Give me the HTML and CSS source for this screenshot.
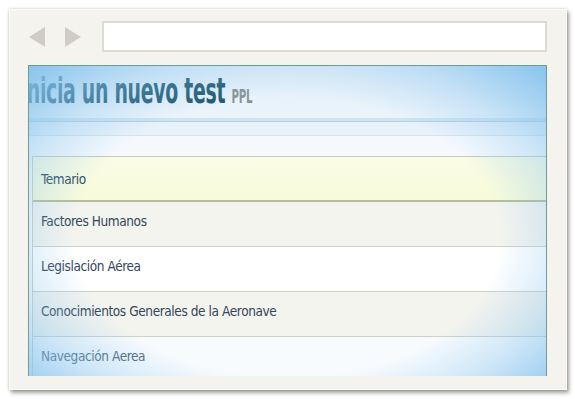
FILE: index.html
```html
<!DOCTYPE html>
<html lang="es">
<head>
    <meta charset="UTF-8">
    <meta name="viewport" content="width=device-width, initial-scale=1.0">
    <title>Inicia un nuevo test</title>
    <link rel="stylesheet" href="styles.css">
</head>
<body>

    <div class="browser">
        <div class="toolbar">
            <div class="nav">
                <svg width="52" height="20" viewBox="0 0 52 20">
                    <polygon points="0,10 16,0 16,20" fill="#cfccc5"/>
                    <polygon points="36,0 52,10 36,20" fill="#cfccc5"/>
                </svg>
            </div>
            <div class="url"></div>
        </div>

        <div class="screen">
            <div class="header">
                <h1><span class="title">Inicia un nuevo test <small>PPL</small></span></h1>
            </div>
            <div class="stripe"></div>
            <div class="sub"></div>

            <ul class="list">
                <li class="head">Temario</li>
                <li class="alt">Factores Humanos</li>
                <li>Legislación Aérea</li>
                <li class="alt">Conocimientos Generales de la Aeronave</li>
                <li class="last">Navegación Aerea<div class="btn"></div></li>
            </ul>

            <div class="vignette"></div>
        </div>
    </div>

</body>
</html>
```

FILE: styles.css
```css
* {
    margin: 0;
    padding: 0;
    box-sizing: border-box;
}

body {
    background: #ffffff;
    font-family: "DejaVu Sans Condensed", "Liberation Sans", sans-serif;
}

.browser {
    margin: 9px;
    width: 558px;
    height: 381px;
    background: #f4f3ee;
    border: 1px solid #fbfaf7;
    box-shadow: 2px 3px 4px rgba(0, 0, 0, 0.35), 0 0 3px rgba(0, 0, 0, 0.2);
    padding: 11px 19px 13px 18px;
    display: flex;
    flex-direction: column;
}

.toolbar {
    display: flex;
    align-items: center;
    height: 31px;
}

.nav {
    width: 74px;
    padding-left: 1px;
    display: flex;
}

.url {
    flex: 1;
    height: 31px;
    background: #ffffff;
    border: 2px solid #dddcd4;
}

.screen {
    position: relative;
    margin-top: 13px;
    height: 311px;
    overflow: hidden;
    border: 1px solid #6f9c94;
    border-bottom: none;
    background: #f5f9fd;
}

.header {
    height: 52px;
    padding-top: 5px;
    background: linear-gradient(#e2effa, #ebf4fb);
    overflow: hidden;
}

h1 {
    white-space: nowrap;
    line-height: 40px;
    margin-left: -9px;
}

.title {
    display: inline-block;
    font-size: 35px;
    font-weight: bold;
    letter-spacing: -0.5px;
    color: #215a72;
    transform: scaleX(0.6);
    transform-origin: left;
}

.title small {
    font-size: 19px;
    letter-spacing: -0.3px;
    color: #8a9296;
}

.stripe {
    height: 4px;
    background: #cfe3f3;
    border-bottom: 1px solid #b3d2e8;
}

.sub {
    height: 14px;
    background: #e8f2fa;
    border-bottom: 1px solid #d5e6f2;
}

.list {
    list-style: none;
    margin: 20px 0 0 3px;
    border-top: 1px solid #c9ccb6;
    border-left: 1px solid #cbcfc2;
}

.list li {
    height: 45px;
    font-size: 13.5px;
    letter-spacing: -0.4px;
    line-height: 20px;
    color: #33465a;
    padding: 9px 9px 0 8px;
    border-bottom: 1px solid #cfd2c2;
    background: #ffffff;
}

.list li.head {
    padding-top: 12px;
    border-bottom: 2px solid #b9bc9b;
    background: linear-gradient(#fafce6, #f7fbda);
    color: #2c475e;
}

.list li.alt {
    background: #f4f4ef;
}

.list li.last {
    background: #f8fbfe;
    color: #4b667b;
}

.btn {
    width: 60px;
    height: 24px;
    margin: 10px 0 0 4px;
    background: #5e9bd2;
}

.vignette {
    position: absolute;
    inset: 0;
    pointer-events: none;
    background: radial-gradient(ellipse at 50% 55%, rgba(255, 255, 255, 0) 58%, rgba(134, 195, 237, 0.35) 76%, rgba(134, 195, 237, 0.97) 100%);
}
```
